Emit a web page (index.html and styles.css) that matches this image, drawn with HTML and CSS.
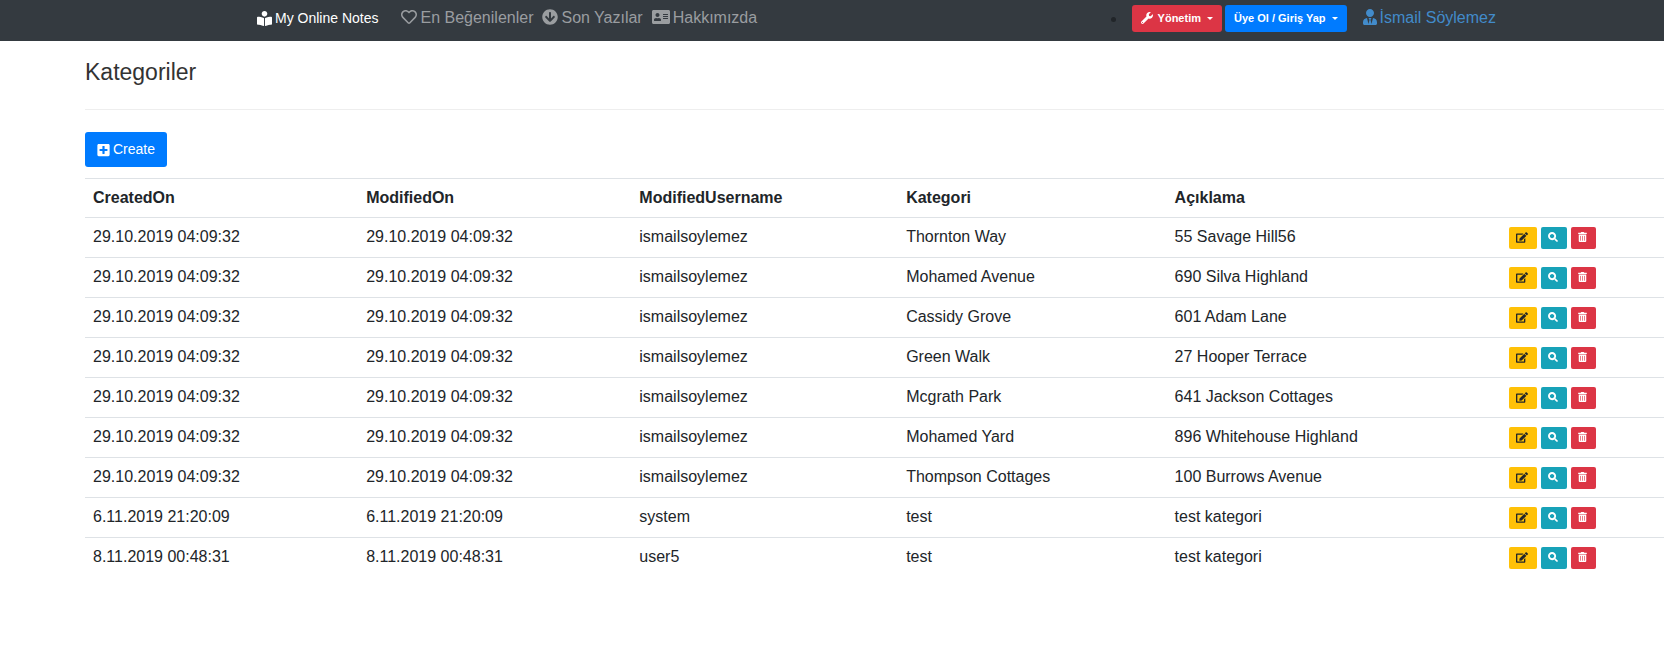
FILE: index.html
```html
<!DOCTYPE html>
<html lang="tr">
<head>
<meta charset="utf-8">
<title>Kategoriler - My Online Notes</title>
<link rel="stylesheet" href="styles.css">
</head>
<body>
<svg class="sprite" aria-hidden="true">
  <symbol id="reader" viewBox="0 0 512 512"><path d="M352 96c0-53.020-42.980-96-96-96s-96 42.980-96 96 42.980 96 96 96 96-42.980 96-96zM233.590 241.100c-59.330-36.320-155.430-46.300-203.790-49.050C13.550 191.130 0 203.510 0 219.140v222.800c0 14.330 11.590 26.280 26.490 27.050 43.660 2.290 131.990 10.680 193.040 41.430 9.370 4.720 20.480-1.710 20.480-11.870V252.560c-.010-4.670-2.320-8.950-6.420-11.460zm248.610-49.050c-48.350 2.740-144.460 12.730-203.780 49.050-4.100 2.510-6.410 6.960-6.410 11.630v245.790c0 10.190 11.140 16.630 20.540 11.900 61.040-30.720 149.320-39.110 192.970-41.400 14.900-.780 26.490-12.730 26.490-27.060V219.140c-.010-15.630-13.560-28.010-29.810-27.090z"/></symbol>
  <symbol id="heart" viewBox="0 0 512 512"><path d="M458.400 64.300C400.600 15.700 311.300 23 256 79.300 200.700 23 111.400 15.600 53.600 64.300-21.600 127.600-10.600 230.800 43 285.500l175.400 178.700c10 10.200 23.400 15.900 37.600 15.900 14.300 0 27.600-5.600 37.600-15.800L469 285.600c53.500-54.700 64.700-157.900-10.600-221.300zm-23.600 187.500L259.400 430.500c-2.400 2.400-4.400 2.400-6.800 0L77.200 251.800c-36.500-37.200-43.900-107.600 7.300-150.700 38.900-32.700 98.900-27.800 136.500 10.500l35 35.700 35-35.700c37.800-38.500 97.800-43.200 136.500-10.600 51.100 43.100 43.500 113.900 7.300 150.800z"/></symbol>
  <symbol id="down" viewBox="0 0 512 512"><path d="M504 256c0 137-111 248-248 248S8 393 8 256 119 8 256 8s248 111 248 248zm-143.600-28.900L288 302.600V120c0-13.300-10.700-24-24-24h-16c-13.300 0-24 10.700-24 24v182.600l-72.400-75.500c-9.300-9.700-24.800-9.900-34.300-.400l-10.900 11c-9.400 9.400-9.400 24.600 0 33.900L239.100 404.300c9.400 9.400 24.600 9.400 33.900 0l132.700-132.700c9.400-9.400 9.400-24.600 0-33.900l-10.900-11c-9.600-9.500-25.100-9.300-34.400.400z"/></symbol>
  <symbol id="card" viewBox="0 0 576 512"><path fill-rule="evenodd" d="M528 32H48C21.500 32 0 53.500 0 80v352c0 26.500 21.500 48 48 48h480c26.500 0 48-21.500 48-48V80c0-26.500-21.500-48-48-48zM176 128c35.300 0 64 28.700 64 64s-28.700 64-64 64-64-28.700-64-64 28.700-64 64-64zm112 236.800c0 10.600-10 19.200-22.400 19.200H86.400C74 384 64 375.400 64 364.800v-19.200c0-31.800 30.100-57.600 67.200-57.600h5c24.600 8 55 8 79.600 0h5c37.100 0 67.200 25.800 67.200 57.600zM512 312c0 4.400-3.600 8-8 8H360c-4.400 0-8-3.600-8-8v-16c0-4.400 3.600-8 8-8h144c4.400 0 8 3.600 8 8zm0-64c0 4.400-3.600 8-8 8H360c-4.400 0-8-3.600-8-8v-16c0-4.400 3.600-8 8-8h144c4.400 0 8 3.600 8 8zm0-64c0 4.400-3.600 8-8 8H360c-4.400 0-8-3.600-8-8v-16c0-4.400 3.600-8 8-8h144c4.400 0 8 3.600 8 8z"/></symbol>
  <symbol id="wrench" viewBox="0 0 512 512"><path d="M507.730 109.100c-2.240-9.030-13.540-12.090-20.120-5.510l-74.360 74.360-67.880-11.310-11.310-67.880 74.360-74.360c6.620-6.620 3.430-17.900-5.660-20.160-47.380-11.740-99.550.910-136.580 37.930-39.640 39.640-50.550 97.100-34.050 147.200L18.740 402.760c-24.990 24.990-24.990 65.510 0 90.500 24.990 24.990 65.510 24.990 90.500 0l213.210-213.210c50.120 16.710 107.470 5.680 147.370-34.220 37.070-37.070 49.700-89.320 37.910-136.730zM64 472c-13.250 0-24-10.750-24-24 0-13.260 10.750-24 24-24s24 10.740 24 24c0 13.250-10.750 24-24 24z"/></symbol>
  <symbol id="user" viewBox="0 0 448 512"><path d="M224 256c70.700 0 128-57.300 128-128S294.700 0 224 0 96 57.300 96 128s57.300 128 128 128zm95.800 32.600L272 480l-32-136 32-56h-96l32 56-32 136-47.800-191.400C56.900 292 0 350.300 0 422.400V464c0 26.500 21.500 48 48 48h352c26.500 0 48-21.500 48-48v-41.600c0-72.100-56.900-130.400-128.200-133.800z"/></symbol>
  <symbol id="plus" viewBox="0 0 448 512"><path d="M400 32H48C21.500 32 0 53.500 0 80v352c0 26.500 21.500 48 48 48h352c26.500 0 48-21.500 48-48V80c0-26.500-21.500-48-48-48zm-32 252c0 6.600-5.400 12-12 12h-92v92c0 6.600-5.400 12-12 12h-56c-6.600 0-12-5.400-12-12v-92H92c-6.600 0-12-5.400-12-12v-56c0-6.600 5.400-12 12-12h92v-92c0-6.600 5.400-12 12-12h56c6.600 0 12 5.400 12 12v92h92c6.600 0 12 5.400 12 12z"/></symbol>
  <symbol id="edit" viewBox="0 0 576 512"><path d="M402.600 83.200l90.200 90.200c3.800 3.800 3.800 10 0 13.800L274.400 405.600l-92.800 10.300c-12.400 1.400-22.900-9.100-21.500-21.500l10.300-92.800L388.800 83.200c3.800-3.800 10-3.800 13.800 0zm162-22.900l-48.800-48.800c-15.200-15.200-39.900-15.200-55.200 0l-35.400 35.400c-3.800 3.800-3.800 10 0 13.800l90.200 90.200c3.800 3.800 10 3.800 13.800 0l35.400-35.400c15.200-15.300 15.200-40 0-55.200zM384 346.200V448H64V128h229.800c3.200 0 6.200-1.300 8.500-3.500l40-40c7.600-7.600 2.200-20.500-8.500-20.500H48C21.500 64 0 85.500 0 112v352c0 26.500 21.500 48 48 48h352c26.500 0 48-21.500 48-48V306.200c0-10.700-12.900-16-20.500-8.500l-40 40c-2.200 2.300-3.500 5.300-3.500 8.500z"/></symbol>
  <symbol id="search" viewBox="0 0 512 512"><path fill-rule="evenodd" d="M505 442.700L405.300 343c-4.500-4.500-10.600-7-17-7H372c27.600-35.300 44-79.700 44-128C416 93.100 322.900 0 208 0S0 93.100 0 208s93.100 208 208 208c48.300 0 92.700-16.400 128-44v16.300c0 6.400 2.500 12.500 7 17l99.700 99.700c9.400 9.400 24.600 9.400 33.900 0l28.300-28.300c9.400-9.400 9.400-24.600.100-34zM208 320c-62 0-112-50-112-112S146 96 208 96s112 50 112 112-50 112-112 112z"/></symbol>
  <symbol id="trash" viewBox="0 0 448 512"><path fill-rule="evenodd" d="M32 464a48 48 0 0 0 48 48h288a48 48 0 0 0 48-48V128H32zm272-256a16 16 0 0 1 32 0v224a16 16 0 0 1-32 0zm-96 0a16 16 0 0 1 32 0v224a16 16 0 0 1-32 0zm-96 0a16 16 0 0 1 32 0v224a16 16 0 0 1-32 0zM432 32H312l-9.400-18.700A24 24 0 0 0 281.100 0H166.800a24 24 0 0 0-21.400 13.300L136 32H16A16 16 0 0 0 0 48v32a16 16 0 0 0 16 16h416a16 16 0 0 0 16-16V48a16 16 0 0 0-16-16z"/></symbol>
</svg>

<nav class="navbar">
  <a class="brand" href="#"><svg class="icon i14"><use href="#reader"/></svg>My Online Notes</a>
  <div class="links">
    <a href="#"><svg class="icon i16"><use href="#heart"/></svg>En Beğenilenler</a>
    <a href="#"><svg class="icon i16"><use href="#down"/></svg>Son Yazılar</a>
    <a href="#"><svg class="icon i18"><use href="#card"/></svg>Hakkımızda</a>
  </div>
  <ul class="menus">
    <li>
      <div class="menu-row">
        <button class="btn nav-btn danger" type="button"><svg class="icon i12"><use href="#wrench"/></svg>Yönetim<span class="caret"></span></button>
        <button class="btn nav-btn primary" type="button">Üye Ol / Giriş Yap<span class="caret"></span></button>
      </div>
    </li>
  </ul>
  <a class="account" href="#"><svg class="icon i14w"><use href="#user"/></svg>İsmail Söylemez</a>
</nav>

<main class="content">
  <h1>Kategoriler</h1>
  <hr>
  <a class="btn create primary" href="#"><svg class="icon i13"><use href="#plus"/></svg>Create</a>
  <table>
    <colgroup><col class="c-date"><col class="c-date"><col class="c-user"><col class="c-cat"><col class="c-desc"><col></colgroup>
    <thead>
      <tr><th>CreatedOn</th><th>ModifiedOn</th><th>ModifiedUsername</th><th>Kategori</th><th>Açıklama</th><th></th></tr>
    </thead>
    <tbody id="rows"></tbody>
  </table>
</main>
<script src="rows.js"></script>
</body>
</html>
```
FILE: styles.css
```css
* { box-sizing: border-box; }

body {
  margin: 0;
  background: #fff;
  color: #212529;
  font: 16px/23px "Liberation Sans", Arial, sans-serif;
  overflow-x: hidden;
}

a { text-decoration: none; }
.sprite { display: none; }

.icon { flex: none; height: 16px; fill: currentColor; }
.i11 { width: 12px; height: 11px; }
.i10 { width: 10px; height: 10px; }
.i9 { width: 9px; height: 10px; }
.i12 { width: 12px; height: 12px; }
.i13 { width: 13px; height: 14px; }
.i14 { width: 15px; height: 15px; }
.i14w { width: 14px; }
.i16 { width: 16px; }
.i18 { width: 18px; }

.navbar {
  display: flex;
  align-items: flex-start;
  height: 41px;
  padding: 5px 168px 0 257px;
  background: #343a40;
}
.navbar a { display: flex; align-items: center; gap: 3px; height: 24px; }
.navbar .brand { color: #fff; font-size: 14px; height: 26px; }
.links { display: flex; gap: 9px; margin-left: 23px; }
.links a { color: #9a9da0; }
.navbar .account { color: #428bca; margin-left: 16px; }

.menus { margin: 0 0 0 auto; padding: 0; }
.menus li { padding-left: 5px; }
.menu-row { display: flex; gap: 3px; }

.btn {
  display: inline-flex;
  align-items: center;
  border: 0;
  border-radius: 3px;
  color: #fff;
  font-family: inherit;
}
.nav-btn { height: 27px; padding: 0 9px 1px; font-size: 11px; font-weight: bold; }
.nav-btn .icon { margin-right: 5px; }
.caret {
  margin-left: 6px;
  border: 3px solid transparent;
  border-top-color: currentColor;
  border-bottom: 0;
}
.primary { background: #007bff; }
.danger { background: #dc3545; }
.warning { background: #ffc107; color: #212529; }
.info { background: #17a2b8; }

.content { padding: 18px 0 0 85px; }
h1 { margin: 0; font-size: 23px; line-height: 26px; font-weight: normal; color: #333; }
hr { margin: 24px 0 22px; border: 0; border-top: 1px solid #eee; }
.create { height: 35px; padding: 0 12px; gap: 3px; font-size: 14px; }

table { width: 100%; margin-top: 11px; border-collapse: collapse; table-layout: fixed; }
.c-date { width: 17.3%; }
.c-user { width: 16.9%; }
.c-cat { width: 17%; }
.c-desc { width: 21.2%; }
th, td { border-top: 1px solid #dee2e6; text-align: left; vertical-align: top; }
th { padding: 7px 8px 8px; }
td { padding: 7px 8px; }
.actions { display: flex; gap: 4px; padding: 2px 0 1px; }
.actions .btn { align-items: flex-start; height: 22px; padding: 5px 9px 0 7px; border-radius: 2px; }
```
FILE: rows.js
```js
const date = "29.10.2019 04:09:32";
const rows = [
  [date, "ismailsoylemez", "Thornton Way", "55 Savage Hill56"],
  [date, "ismailsoylemez", "Mohamed Avenue", "690 Silva Highland"],
  [date, "ismailsoylemez", "Cassidy Grove", "601 Adam Lane"],
  [date, "ismailsoylemez", "Green Walk", "27 Hooper Terrace"],
  [date, "ismailsoylemez", "Mcgrath Park", "641 Jackson Cottages"],
  [date, "ismailsoylemez", "Mohamed Yard", "896 Whitehouse Highland"],
  [date, "ismailsoylemez", "Thompson Cottages", "100 Burrows Avenue"],
  ["6.11.2019 21:20:09", "system", "test", "test kategori"],
  ["8.11.2019 00:48:31", "user5", "test", "test kategori"]
];
const actions = `<td><div class="actions">
  <a class="btn warning" href="#" aria-label="Edit"><svg class="icon i11"><use href="#edit"/></svg></a>
  <a class="btn info" href="#" aria-label="Details"><svg class="icon i10"><use href="#search"/></svg></a>
  <a class="btn danger" href="#" aria-label="Delete"><svg class="icon i9"><use href="#trash"/></svg></a>
</div></td>`;
document.getElementById("rows").innerHTML = rows
  .map(([when, user, name, text]) => "<tr>" + [when, when, user, name, text].map(v => `<td>${v}</td>`).join("") + actions + "</tr>")
  .join("");
```
